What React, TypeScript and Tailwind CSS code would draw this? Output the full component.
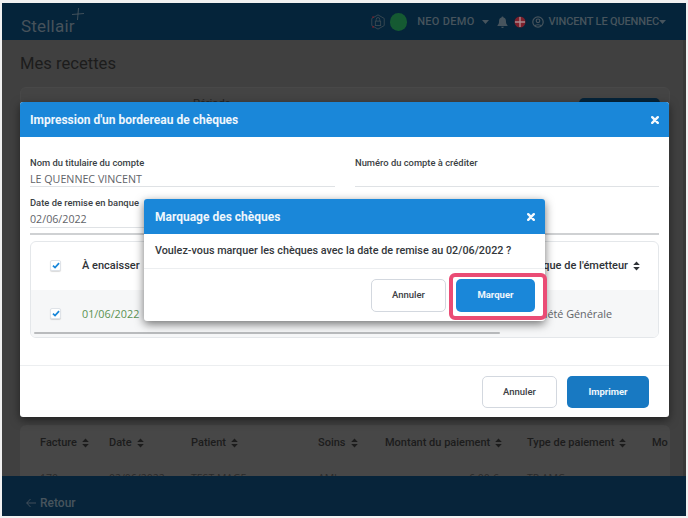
import React from "react";

const Sort = ({ className = "" }: { className?: string }) => (
  <svg width="7" height="10" viewBox="0 0 7 10" className={className} fill="currentColor">
    <path d="M3.5 0.5 6.8 4H0.2Z M3.5 9.5 0.2 6H6.8Z" />
  </svg>
);

const Caret = ({ className = "" }: { className?: string }) => (
  <svg width="7" height="4" viewBox="0 0 7 4" className={className} fill="currentColor">
    <path d="M0 0H7L3.5 4Z" />
  </svg>
);

const Close = () => (
  <svg width="8" height="8" viewBox="0 0 8 8" stroke="#f4f9fd" strokeWidth="2.4" strokeLinecap="round">
    <path d="M1.2 1.2 6.8 6.8M6.8 1.2 1.2 6.8" />
  </svg>
);

const Check = () => (
  <span className="mb-[2px] flex h-[11px] w-[11px] items-center justify-center rounded-[2px] border border-[#dfe3e8] bg-white shadow-[0_1px_1px_rgba(0,0,0,0.15)]">
    <svg width="8" height="7" viewBox="0 0 9 8" fill="none" stroke="#1a87d9" strokeWidth="2">
      <path d="M1 4.2 3.4 6.4 8 1.2" />
    </svg>
  </span>
);

const Label = ({ children }: { children: React.ReactNode }) => (
  <div className="h-[14px] text-[9.4px] leading-[14px] font-medium text-[#3b3f45]">{children}</div>
);

const BgHead = ({ label, className }: { label: string; className: string }) => (
  <span className={`flex items-center gap-[5px] ${className}`}>
    {label}
    <Sort />
  </span>
);

export default function App() {
  return (
    <div className="relative h-[518px] w-[688px] overflow-hidden bg-[#f1f1f1] pt-[3px] pr-[2px] pb-[2px] pl-[2px] font-['Roboto',sans-serif]">
      <div className="relative flex h-full flex-col bg-[#404040]">
        <header className="flex h-[37px] shrink-0 items-center bg-[#05243a] pt-[1px] pr-[20px] pl-[19px]">
          <div className="relative mt-[8px] text-[17px] leading-none tracking-[0.2px] text-[#47525a]">
            Stellair
            <svg width="12" height="12" viewBox="0 0 12 12" className="absolute -top-[10px] -right-[9px]" stroke="#4f5a62" strokeWidth="0.8">
              <path d="M6.5 0 5.5 12M0 6.5 12 5.5" />
            </svg>
          </div>
          <div className="ml-auto flex items-center text-[11px] font-medium whitespace-nowrap text-[#47545d]">
            <svg width="16" height="16" viewBox="0 0 18 18" fill="none" stroke="#3c4a53" strokeWidth="1">
              <path d="M9 1 16 5V13L9 17 2 13V5Z" />
              <rect x="6" y="8" width="6" height="5" />
              <path d="M7 8V6A2 2 0 0 1 11 6V8" />
              <circle cx="3.5" cy="3.5" r="1" fill="#7d1f2b" stroke="none" />
              <circle cx="3.5" cy="14.5" r="1" fill="#7d1f2b" stroke="none" />
            </svg>
            <span className="ml-[4px] h-[18px] w-[17px] rounded-full bg-[#155a32]" />
            <span className="ml-[10px] tracking-[0.3px]">NEO DEMO</span>
            <Caret className="ml-[7px]" />
            <svg width="11" height="12" viewBox="0 0 11 12" className="ml-[8px]" fill="#47545d">
              <path d="M5.5 0.5A1 1 0 0 1 6.5 1.6C8.3 2 9 3.5 9 5.5 9 7.5 9.5 8.3 10.5 9.2V10H0.5V9.2C1.5 8.3 2 7.5 2 5.5 2 3.5 2.7 2 4.5 1.6A1 1 0 0 1 5.5 0.5ZM4.2 10.7H6.8A1.3 1.3 0 0 1 4.2 10.7Z" />
            </svg>
            <svg width="12" height="12" viewBox="0 0 12 12" className="ml-[6px]">
              <circle cx="6" cy="6" r="5.5" fill="#7d1f2b" />
              <path d="M6 1V11M1 6H11" stroke="#a98a8e" strokeWidth="1.4" />
            </svg>
            <svg width="12" height="12" viewBox="0 0 12 12" className="ml-[6px]" fill="none" stroke="#47545d" strokeWidth="1.2">
              <circle cx="6" cy="6" r="5.2" />
              <circle cx="6" cy="4.8" r="1.8" />
              <path d="M2.6 10C3.2 8.3 8.8 8.3 9.4 10" />
            </svg>
            <span className="ml-[5px] tracking-[-0.15px]">VINCENT LE QUENNEC</span>
            <Caret className="ml-[0px]" />
          </div>
        </header>

        <main className="relative min-h-0 flex-1 overflow-hidden pr-[16px] pl-[18px]">
          <h1 className="mt-[13px] text-[16.6px] leading-[22px] text-[#1c1c1c]">Mes recettes</h1>
          <div className="mt-[12px] flex h-[100px] items-start rounded-t-[6px] border border-[#484848] bg-[#444444] pt-[10px]">
            <span className="ml-[172px] text-[11px] leading-none text-[#222]">Période</span>
            <span className="mr-[9px] ml-auto h-[30px] w-[81px] rounded-[5px] bg-[#05243a]" />
          </div>
          <div className="mt-[238px] flex h-[100px] flex-col rounded-[6px] bg-[#474747] pt-[10px] pl-[20px] text-[11px] font-medium text-[#1c1c1c]">
            <div className="flex h-[16px] items-center whitespace-nowrap">
              <BgHead label="Facture" className="w-[69px]" />
              <BgHead label="Date" className="w-[82px]" />
              <BgHead label="Patient" className="w-[127px]" />
              <BgHead label="Soins" className="w-[67px]" />
              <BgHead label="Montant du paiement" className="w-[142px]" />
              <BgHead label="Type de paiement" className="w-[125px]" />
              <span>Mo</span>
            </div>
            <div className="mt-[20px] flex whitespace-nowrap font-['Open_Sans',sans-serif] text-[10.5px] font-normal text-[#2a2a2a]">
              <span className="w-[69px]">170</span>
              <span className="w-[82px]">02/06/2022</span>
              <span className="w-[127px]">TEST MAGE</span>
              <span className="w-[67px]">AMI</span>
              <span className="w-[142px] pl-[84px]">6,00 €</span>
              <span className="w-[125px]">TP AMC</span>
            </div>
          </div>
          <span className="absolute top-0 right-0 h-full w-[3px] bg-[#383838]" />
        </main>

        <footer className="flex h-[40px] shrink-0 items-center gap-[4px] bg-[#07243a] pt-[13px] pl-[24px] text-[12px] font-medium text-[#47545d]">
          <svg width="10" height="10" viewBox="0 0 10 10" fill="none" stroke="#47545d" strokeWidth="0.9">
            <path d="M10 5H0.7M4.5 1 0.7 5 4.5 9" />
          </svg>
          Retour
        </footer>
      </div>

      {/* Main dialog */}
      <div className="absolute top-[102px] left-[20px] flex h-[315px] w-[649px] flex-col overflow-hidden rounded-[3px] bg-white shadow-[0_3px_10px_rgba(0,0,0,0.5)]">
        <div className="flex h-[35px] shrink-0 items-center justify-between bg-[#1a87d9] pr-[10px] pl-[10px] text-[12px] font-bold text-[#eef6fc]">
          Impression d'un bordereau de chèques
          <Close />
        </div>
        <div className="flex-1 px-[10px] pt-[19px]">
          <div className="flex gap-[20px]">
            <div className="w-[305px]">
              <Label>Nom du titulaire du compte</Label>
              <div className="h-[17px] border-b border-[#dfe2e5] font-['Open_Sans',sans-serif] text-[10.7px] leading-[18px] text-[#5f6368]">LE QUENNEC VINCENT</div>
            </div>
            <div className="w-[304px]">
              <Label>Numéro du compte à créditer</Label>
              <div className="h-[17px] border-b border-[#dfe2e5]" />
            </div>
          </div>
          <div className="mt-[9px] w-[305px]">
            <Label>Date de remise en banque</Label>
            <div className="h-[18px] border-b border-[#dfe2e5] font-['Open_Sans',sans-serif] text-[10.7px] leading-[18px] text-[#5f6368]">02/06/2022</div>
          </div>
          <div className="mt-[5px] h-[2px] bg-[#cfd1d3]" />
          <div className="relative mt-[6px] h-[97px] overflow-hidden rounded-[6px] border border-[#e4e7ea]">
            <div className="flex h-[48px] items-center text-[11px] font-medium text-[#2f3337]">
              <span className="ml-[19px]"><Check /></span>
              <span className="ml-[21px] flex items-center gap-[4px]">À encaisser<Sort /></span>
              <span className="ml-auto flex items-center gap-[5px] pr-[18px]">
                Banque de l'émetteur
                <Sort />
              </span>
            </div>
            <div className="flex h-[48px] items-center bg-[#f6f7f8] font-['Open_Sans',sans-serif] text-[10.8px]">
              <span className="ml-[19px]"><Check /></span>
              <span className="ml-[21px] text-[#5b9252]">01/06/2022</span>
              <span className="mr-[46px] ml-auto text-[#5f6368]">Société Générale</span>
            </div>
            <div className="absolute top-[90px] left-[3px] h-[2px] w-[466px] rounded-full bg-[#b9bbbd]" />
          </div>
        </div>
        <div className="flex h-[52px] shrink-0 items-start justify-end gap-[10px] border-t border-[#eceef0] pt-[10px] pr-[20px]">
          <button className="h-[32px] w-[75px] rounded-[5px] border border-[#d3d8df] bg-white text-[9.5px] font-medium text-[#3d4146]">Annuler</button>
          <button className="h-[32px] w-[82px] rounded-[5px] bg-[#1879c2] text-[9.5px] font-bold text-[#eef6fc]">Imprimer</button>
        </div>
      </div>

      {/* Nested dialog */}
      <div className="absolute top-[199px] left-[144px] flex h-[122px] w-[401px] flex-col overflow-hidden rounded-[3px] bg-white shadow-[0_3px_10px_rgba(0,0,0,0.55)]">
        <div className="flex h-[35px] shrink-0 items-center justify-between bg-[#1a87d9] pr-[10px] pl-[11px] text-[12px] font-bold text-[#eef6fc]">
          Marquage des chèques
          <Close />
        </div>
        <div className="flex h-[35px] shrink-0 items-center border-b border-[#eceef0] pt-[1px] pl-[11px] text-[10.8px] font-medium text-[#33373b]">
          Voulez-vous marquer les chèques avec la date de remise au 02/06/2022 ?
        </div>
        <div className="flex flex-1 items-start justify-end gap-[10px] pt-[10px] pr-[10px]">
          <button className="h-[33px] w-[75px] rounded-[5px] border border-[#d3d8df] bg-white text-[9.5px] font-medium text-[#3d4146]">Annuler</button>
          <button className="h-[33px] w-[79px] rounded-[5px] bg-[#1a87d9] text-[9.5px] font-bold text-[#eef6fc]">Marquer</button>
        </div>
      </div>

      {/* Highlight */}
      <div className="absolute top-[273px] left-[449px] h-[47px] w-[98px] rounded-[6px] border-[4px] border-[#ea4c75]" />
    </div>
  );
}
